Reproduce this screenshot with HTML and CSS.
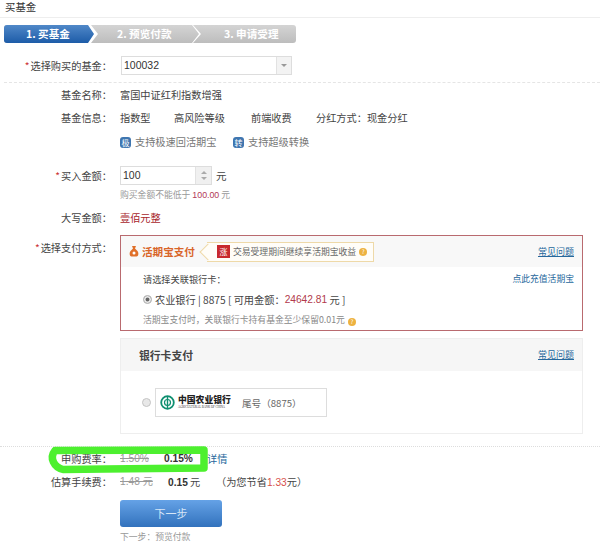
FILE: index.html
```html
<!DOCTYPE html>
<html lang="zh">
<head>
<meta charset="utf-8">
<title>买基金</title>
<link rel="stylesheet" href="styles.css">
</head>
<body>
<div class="page">
  <h1 class="title">买基金</h1>
  <div class="steps">
    <div class="step step-active">1. 买基金</div>
    <div class="step step-two">2. 预览付款</div>
    <div class="step step-three">3. 申请受理</div>
    <svg class="step-sep sep-one" viewBox="0 0 12 18"><path d="M0 0h3l7 9-7 9H0l6-9z" fill="#fff"/></svg>
    <svg class="step-sep sep-two" viewBox="0 0 12 18"><path d="M0 0h1l8 9-8 9H0l7-9z" fill="#fff"/></svg>
  </div>

  <div class="row row-select">
    <div class="label"><i>*</i>选择购买的基金：</div>
    <div class="select"><span>100032</span><b class="select-btn"><em></em></b></div>
  </div>
  <div class="dash"></div>
  <div class="row row-name">
    <div class="label">基金名称：</div>
    <div class="value">富国中证红利指数增强</div>
  </div>
  <div class="row row-info">
    <div class="label">基金信息：</div>
    <div class="value info"><span class="c1">指数型</span><span class="c2">高风险等级</span><span class="c3">前端收费</span><span>分红方式：现金分红</span></div>
  </div>
  <div class="row row-support">
    <div class="label"></div>
    <div class="value support">
      <span class="sup"><b class="sup-ic">极</b>支持极速回活期宝</span>
      <span class="sup"><b class="sup-ic">转</b>支持超级转换</span>
    </div>
  </div>

  <div class="row row-amount">
    <div class="label"><i>*</i>买入金额：</div>
    <div class="spinner"><span>100</span><b class="spin-btn"><em class="up"></em><em class="down"></em></b></div>
    <div class="unit">元</div>
  </div>
  <div class="row row-hint">
    <div class="label"></div>
    <div class="hint">购买金额不能低于 <span class="red">100.00</span> 元</div>
  </div>
  <div class="row row-upper">
    <div class="label">大写金额：</div>
    <div class="upper">壹佰元整</div>
  </div>

  <div class="row row-pay">
    <div class="label label-pay"><i>*</i>选择支付方式：</div>
    <div class="pay-col">
      <div class="card card-red">
        <div class="card-head">
          <svg class="bag" width="10" height="11" viewBox="0 0 10 11"><path d="M3 0h4L6 2.5l2.5 2.5c1.5 2 1 5.500-1 5.500h-5c-2 0-2.500-3.500-1-5.500L4 2.500z" fill="#e0702a"/><circle cx="5" cy="7" r="1.500" fill="#fff"/></svg>
          <span class="card-title">活期宝支付</span>
          <div class="tip">
            <b class="tip-ic">涨</b><span>交易受理期间继续享活期宝收益</span><em class="coin">?</em>
          </div>
          <a class="faq">常见问题</a>
        </div>
        <div class="card-body">
          <div class="body-top"><span class="pick">请选择关联银行卡：</span><a class="topup">点此充值活期宝</a></div>
          <div class="bank-line"><span class="radio on"></span>农业银行 | 8875 [ 可用金额：<span class="amount">24642.81</span> 元 ]</div>
          <div class="note">活期宝支付时，关联银行卡持有基金至少保留0.01元<em class="coin">?</em></div>
        </div>
      </div>
      <div class="card card-grey">
        <div class="bank-head"><span class="bank-title">银行卡支付</span><a class="faq">常见问题</a></div>
        <div class="bank-body">
          <span class="radio"></span>
          <div class="bank-tile">
            <svg width="15" height="15" viewBox="0 0 15 15"><circle cx="7.500" cy="7.500" r="6.300" fill="none" stroke="#0f8f70" stroke-width="1.800"/><circle cx="7.500" cy="7.500" r="3" fill="none" stroke="#0f8f70" stroke-width="1.200"/><path d="M7.500 2v11" stroke="#0f8f70" stroke-width="1.400"/></svg>
            <div class="logo-text"><strong>中国农业银行</strong><small>AGRICULTURAL BANK OF CHINA</small></div>
            <span class="tail">尾号（8875）</span>
          </div>
        </div>
      </div>
    </div>
  </div>

  <div class="dots"></div>
  <div class="row row-fee">
    <div class="label">申购费率：</div>
    <div class="value fee"><s class="f1">1.50%</s><strong>0.15%</strong><a class="more">详情</a></div>
    <svg class="marker" width="165" height="30" viewBox="0 0 165 30"><path d="M10 5.500 L159 5 L159 23 L60 24 L18 24.500 C9 22 4 13 10 5.500Z" fill="none" stroke="#4df02f" stroke-width="7.500" stroke-linejoin="round"/></svg>
  </div>
  <div class="row row-est">
    <div class="label">估算手续费：</div>
    <div class="value fee"><s class="f2">1.48 元</s><span class="e2"><strong>0.15</strong> 元</span><span>（为您节省<span class="orange">1.33</span>元）</span></div>
  </div>
  <div class="row row-btn">
    <div class="label"></div>
    <div class="btn">下一步</div>
  </div>
  <div class="row row-next">
    <div class="label"></div>
    <div class="hint">下一步：预览付款</div>
  </div>
</div>
</body>
</html>
```
FILE: styles.css
```css
* { box-sizing: border-box; }
html, body { margin: 0; padding: 0; }
body { width: 600px; height: 544px; overflow: hidden; background: #fff; color: #444; font-family: "Noto Sans CJK SC", "Liberation Sans", sans-serif; font-size: 10.2px; line-height: 14px; }
.page { position: relative; width: 600px; height: 544px; }
.title { margin: 0; padding: 0 0 0 5px; height: 18px; font-size: 10.4px; line-height: 14px; font-weight: 400; color: #333; border-bottom: 1px solid #eee; }
.steps { position: relative; display: flex; margin: 7px 0 0 4px; width: 292px; height: 18px; border-radius: 3px; overflow: hidden; background: linear-gradient(#d4d4d4, #bdbdbd); font-size: 10.600px; font-weight: 700; color: #fff; }
.step { height: 18px; line-height: 18px; padding-left: 22px; white-space: nowrap; }
.step-active { width: 93px; background: linear-gradient(#5088c8, #1d5ca8); clip-path: polygon(0 0, 86px 0, 93px 9px, 86px 18px, 0 18px); }
.step-two { width: 103px; padding-left: 20px; }
.step-three { padding-left: 24px; }
.step-sep { position: absolute; top: 0; width: 12px; height: 18px; }
.sep-one { left: 84px; }
.sep-two { left: 188px; }
.row { display: flex; }
.label { flex: none; width: 112px; text-align: right; color: #444; }
.label i { font-style: normal; color: #c33; margin-right: 1px; }
.label-pay { padding-top: 6px; }
.value { margin-left: 8px; color: #444; }
.row-select { margin-top: 13px; height: 19px; align-items: center; }
.select { display: flex; justify-content: space-between; margin-left: 9px; width: 171px; height: 19px; border: 1px solid #ddd; color: #333; font-family: "Liberation Sans", sans-serif; font-size: 10.500px; line-height: 17px; padding-left: 2px; }
.select-btn { display: flex; align-items: center; justify-content: center; width: 15px; background: #f3f3f3; border-left: 1px solid #e2e2e2; }
.select-btn em { width: 0; height: 0; border: 3px solid transparent; border-top: 3px solid #999; border-bottom: 0; }
.dash { margin: 7px 0 0 4px; height: 0; border-top: 1px dashed #e5e5e5; }
.row-name { margin-top: 5px; }
.row-info { margin-top: 9px; }
.info span { display: inline-block; }
.c1 { width: 54px; }
.c2 { width: 77px; }
.c3 { width: 65px; }
.row-support { margin-top: 10px; }
.support { display: flex; color: #777; font-size: 10.200px; }
.sup { display: flex; align-items: center; width: 113px; }
.sup-ic { display: block; flex: none; width: 11px; height: 11px; margin-right: 4px; border-radius: 3px; background: #3f76b0; color: #fff; font-size: 8px; line-height: 11px; font-weight: 400; text-align: center; }
.row-amount { margin-top: 17px; height: 19px; align-items: center; }
.spinner { display: flex; justify-content: space-between; margin-left: 8px; width: 92px; height: 19px; border: 1px solid #ddd; padding-left: 2px; color: #333; font-family: "Liberation Sans", sans-serif; font-size: 10.500px; line-height: 17px; }
.spin-btn { display: flex; flex-direction: column; align-items: center; justify-content: center; gap: 3px; width: 16px; background: #f0f0f0; border-left: 1px solid #e2e2e2; }
.spin-btn em { width: 0; height: 0; border: 3.500px solid transparent; }
.spin-btn .up { border-top: 0; border-bottom: 3.500px solid #aaa; }
.spin-btn .down { border-bottom: 0; border-top: 3.500px solid #aaa; }
.unit { margin-left: 4px; font-size: 10.500px; }
.row-hint { margin-top: 3px; }
.hint { margin-left: 8px; font-size: 8.800px; color: #999; }
.red { color: #b23a56; font-family: "Liberation Sans", sans-serif; }
.row-upper { margin-top: 9px; }
.upper { margin-left: 8px; color: #a8262c; }
.row-pay { margin-top: 10px; }
.pay-col { display: flex; flex-direction: column; gap: 7px; width: 463px; margin-left: 8px; }
.card-red { height: 96px; border: 1px solid #b96a6f; }
.card-head { display: flex; align-items: center; height: 31px; background: #f8f8f8; padding: 0 8px 0 8px; }
.bag { flex: none; margin-right: 3px; }
.card-title { font-size: 10.600px; font-weight: 700; color: #d9662a; }
.tip { position: relative; display: flex; align-items: center; margin-left: 12px; height: 20px; width: 167px; border: 1px solid #eed9a8; border-left: 0; background: #fffdf8; padding-left: 10px; color: #666; font-size: 8.800px; white-space: nowrap; }
.tip::before { content: ""; position: absolute; left: -5px; top: 3px; width: 11px; height: 11px; background: #fffdf8; border-left: 1px solid #eed9a8; border-bottom: 1px solid #eed9a8; transform: rotate(45deg); }
.tip > * { position: relative; }
.tip-ic { flex: none; width: 13px; height: 13px; margin-right: 3px; background: #c8282c; color: #fff; font-size: 8px; line-height: 13px; text-align: center; font-weight: 400; }
.coin { display: inline-block; flex: none; width: 8px; height: 8px; margin-left: 3px; border-radius: 50%; background: #edb240; color: #fff; font-size: 6px; line-height: 8px; text-align: center; font-style: normal; vertical-align: -1px; }
.faq { margin-left: auto; color: #26689c; text-decoration: underline; font-size: 9px; }
.card-body { padding: 4px 8px 0 22px; }
.body-top { display: flex; justify-content: space-between; height: 16px; align-items: center; }
.pick { font-size: 9.200px; color: #444; }
.topup { color: #26689c; font-size: 8.800px; }
.bank-line { display: flex; align-items: center; margin-top: 5px; height: 15px; white-space: pre; font-size: 10.200px; color: #444; }
.radio { display: inline-block; flex: none; width: 9px; height: 9px; margin-right: 3px; border: 1px solid #c4c4c4; border-radius: 50%; background: #e8e8e8; }
.radio.on { background: #666; box-shadow: inset 0 0 0 1.500px #eee; }
.amount { color: #b23a4c; font-family: "Liberation Sans", sans-serif; }
.note { margin-top: 6px; font-size: 8.800px; color: #888; }
.card-grey { height: 96px; border: 1px solid #eee; }
.bank-head { display: flex; align-items: center; height: 32px; padding: 0 8px 0 18px; background: #f6f6f6; }
.bank-title { font-size: 10.800px; font-weight: 700; color: #444; }
.bank-body { display: flex; align-items: center; padding: 17px 0 0 21px; }
.bank-body .radio { margin-right: 4px; }
.bank-tile { display: flex; align-items: center; width: 172px; height: 29px; padding-left: 4px; border: 1px solid #ddd; }
.logo-text { display: flex; flex-direction: column; margin-left: 3px; width: 62px; }
.logo-text strong { font-family: "Noto Sans CJK SC", sans-serif; font-size: 8.800px; line-height: 10px; font-weight: 900; color: #222; white-space: nowrap; }
.logo-text small { font-family: "Liberation Serif", serif; font-size: 3px; line-height: 5px; color: #333; white-space: nowrap; }
.tail { margin-left: 2px; font-size: 9.600px; color: #666; white-space: nowrap; }
.dots { margin-top: 12px; height: 0; border-top: 1px dotted #ddd; }
.row-fee { position: relative; margin-top: 4px; height: 16px; align-items: center; }
.row-fee .label { position: relative; }
.fee { display: flex; align-items: center; margin-left: 8px; white-space: nowrap; color: #444; }
.fee > * { position: relative; }
.fee s { color: #999; font-family: "Liberation Sans", "Noto Sans CJK SC", sans-serif; }
.fee strong { font-family: "Liberation Sans", sans-serif; color: #333; }
.f1 { width: 44px; }
.row-fee strong { width: 44px; }
.more { margin-left: -1px; color: #26689c; }
.marker { position: absolute; left: 45px; top: -6px; }
.row-est { margin-top: 7px; height: 16px; align-items: center; }
.f2 { width: 48px; }
.e2 { width: 48px; }
.orange { color: #d8504a; font-family: "Liberation Sans", sans-serif; }
.row-btn { margin-top: 10px; }
.btn { margin-left: 8px; width: 102px; height: 27px; border-radius: 3px; background: linear-gradient(#65a2e6, #3272bd); color: #d6e6f7; font-size: 11px; line-height: 27px; text-align: center; }
.row-next { margin-top: 3px; }
```
